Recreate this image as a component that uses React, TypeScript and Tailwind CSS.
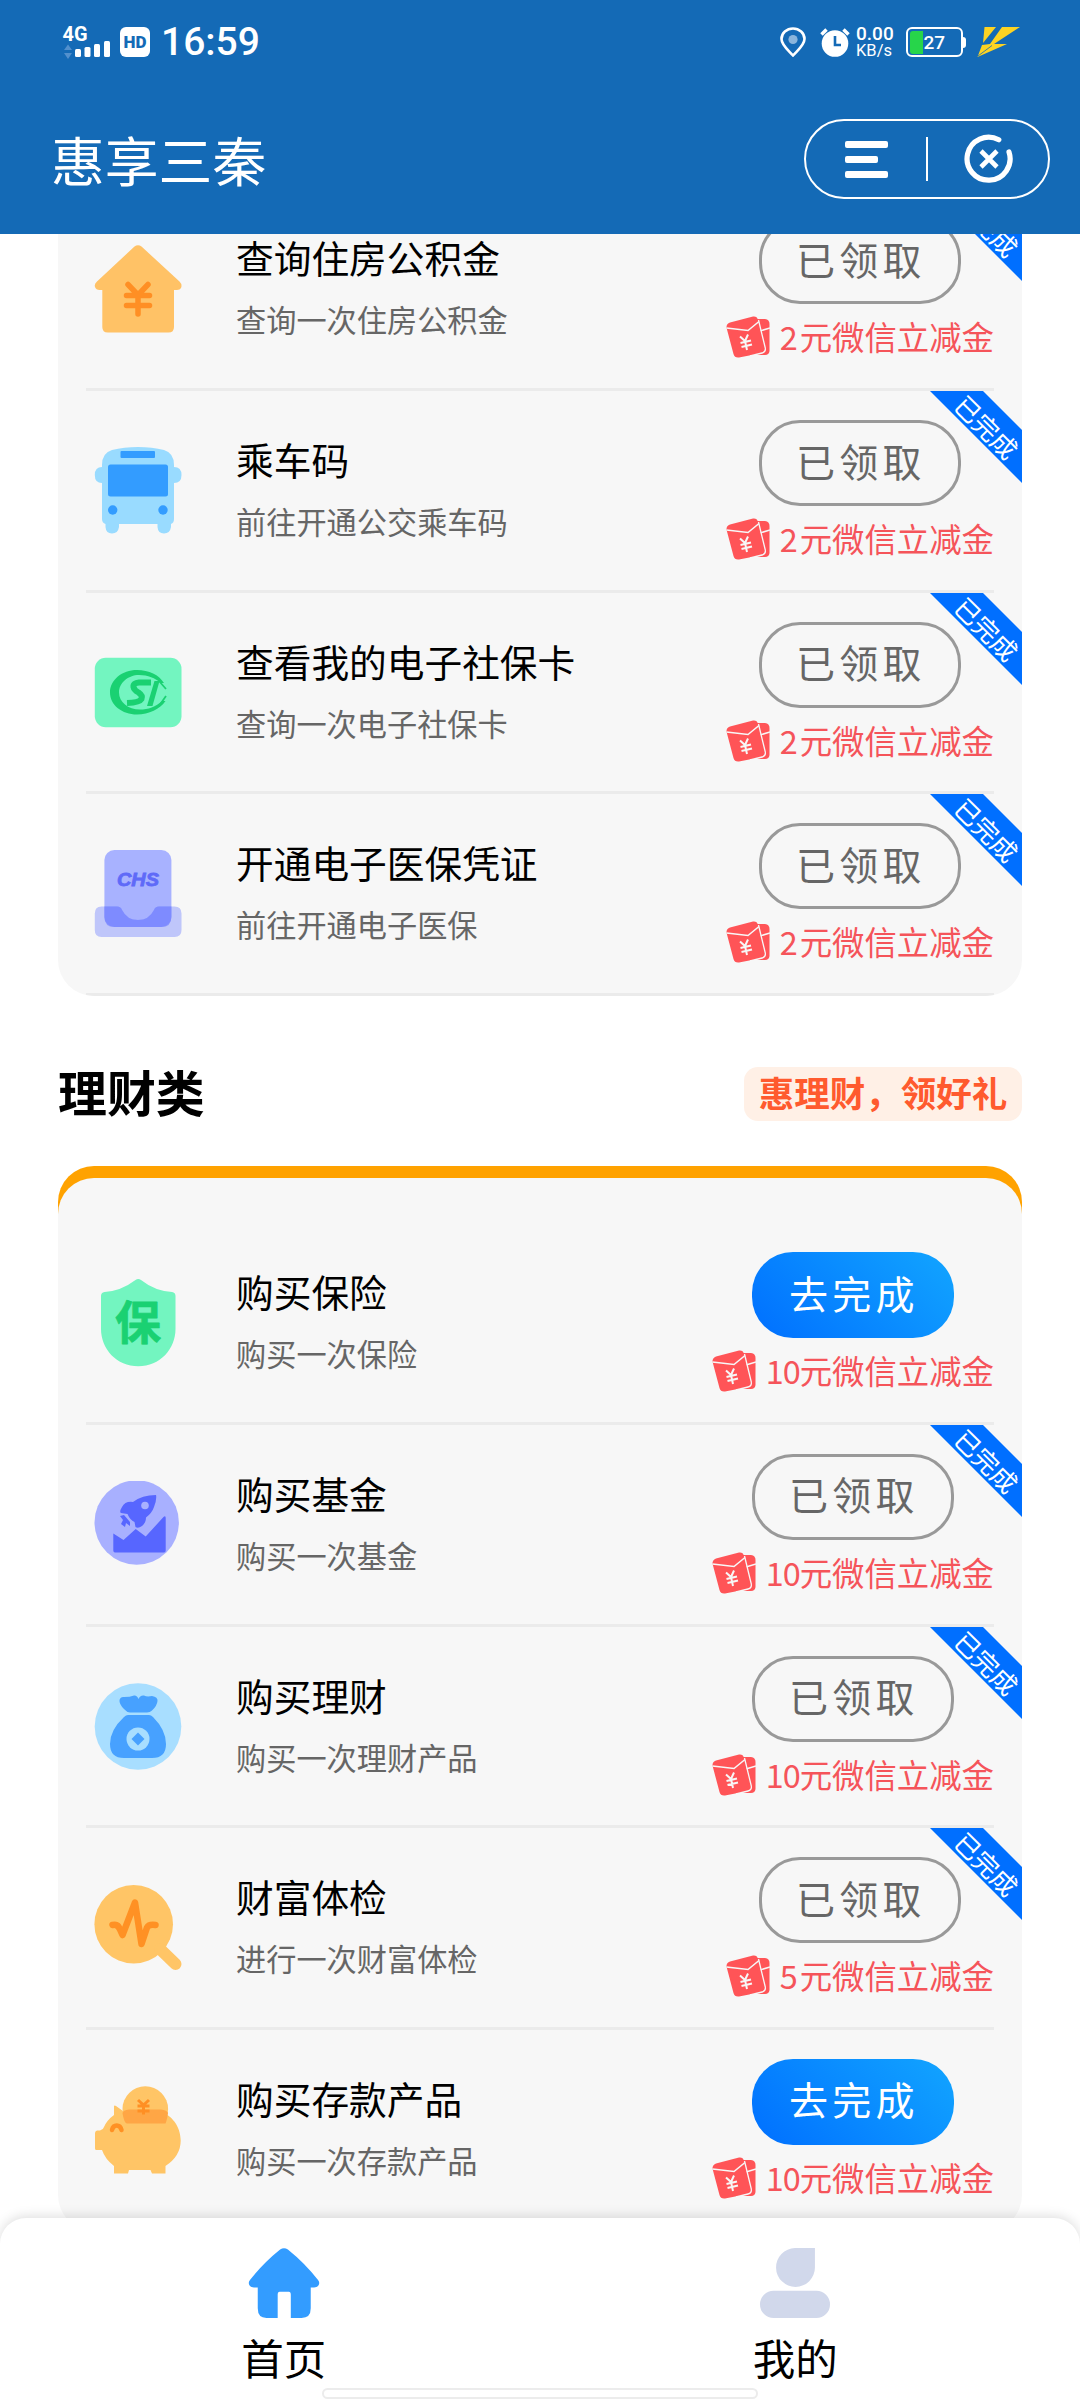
import type { ReactNode } from "react";

type Task = {
  title: string;
  desc: string;
  amount: number;
  done: boolean;
  icon: ReactNode;
};

function HouseIcon() {
  return (
    <svg viewBox="0 0 88 88" className="size-[88px]">
      <path
        d="M40.5 1.5Q44 -1 47.5 1.5L85.5 36.500Q88.500 39.500 87 43Q86 45 83 45H80V82Q80 87.500 74.500 87.500H13.800Q8.300 87.500 8.300 82V45H5.500Q2 45 1 42Q0 39 3 36.500Z"
        fill="#ffc266"
      />
      <path
        d="M34 39.500L44 50L54 39.500M32.500 50.500H55.500M32.500 60.500H55.500M44 50V69"
        fill="none"
        stroke="#ff8f24"
        strokeWidth="5.500"
        strokeLinecap="round"
        strokeLinejoin="round"
      />
    </svg>
  );
}

function BusIcon() {
  return (
    <svg viewBox="0 0 88 88" className="size-[88px]">
      <path
        d="M8 18Q8 6 18 3Q30 0 44 0T70 3Q80 6 80 18V20Q87.500 20 87.500 28T80 36V72Q80 76 77 77V80Q76 86.500 70 86.500T63.500 80V77H25V80Q24 86.500 18 86.500T11.500 80V77Q8 76 8 72V36Q0.800 36 0.800 28T8 20Z"
        fill="#99dbff"
      />
      <rect x="26.500" y="4" width="34.500" height="7" rx="1" fill="#339cff" />
      <rect x="14" y="17.500" width="60" height="32" rx="2.500" fill="#339cff" />
      <circle cx="18.700" cy="63" r="4.700" fill="#339cff" />
      <circle cx="69" cy="63" r="4.700" fill="#339cff" />
    </svg>
  );
}

function SocialCardIcon() {
  return (
    <svg viewBox="0 0 88 88" className="size-[88px]">
      <rect x="0.800" y="8.800" width="86.700" height="69.400" rx="11" fill="#73f5c0" />
      <path
        d="M70 34C65 26 55 21 43 21C28 21 16 31 16 43.500S28 65.500 43 65.500C55 65.500 66 60 71.500 52L68 52C62 58 54 60.500 46 60.500C34 60.500 25 53 25 43.500S34 26 45 26C54 26 61 29 67 34Z"
        fill="#1ad172"
      />
      <path d="M65 32L72 40M72 47L65 57" stroke="#1ad172" strokeWidth="1.800" fill="none" />
      <path
        d="M57 33.500H45Q39 34 39.500 38Q40 41 44.500 43.500Q49 46.500 47.500 50Q45.500 53.500 33 54"
        fill="none"
        stroke="#1ad172"
        strokeWidth="6"
      />
      <path d="M60.500 32H65.500L58.500 57H53Z" fill="#1ad172" />
    </svg>
  );
}

function MedicalIcon() {
  return (
    <svg viewBox="0 0 88 88" className="size-[88px]">
      <rect x="10.400" y="0" width="67" height="77" rx="10" fill="#a8b2ff" />
      <path
        d="M7.500 56.500H23Q27 56.500 28 60Q33 70 44 70T60 60Q61 56.500 65 56.500H80.500Q87.500 56.500 87.500 63.500V80Q87.500 87 80.500 87H7.500Q0.800 87 0.800 80V63.500Q0.800 56.500 7.500 56.500Z"
        fill="#5b6eff"
        fillOpacity="0.360"
      />
      <path
        d="M10.400 56.500H23Q27 56.500 28 60Q33 70 44 70T60 60Q61 56.500 65 56.500H77.400V67Q77.400 77 67.400 77H20.400Q10.400 77 10.400 67Z"
        fill="#7582ff"
        fillOpacity="0.600"
      />
      <text
        x="44"
        y="35.500"
        textAnchor="middle"
        textLength="42"
        lengthAdjust="spacingAndGlyphs"
        className="font-['Liberation_Sans'] text-[18px] font-bold italic"
        fill="#5f6af8"
        stroke="#5f6af8"
        strokeWidth="0.800"
      >
        CHS
      </text>
    </svg>
  );
}

function ShieldIcon() {
  return (
    <svg viewBox="0 0 88 88" className="size-[88px]">
      <path
        d="M41.500 1Q44.300 -1 47 1Q61 12 78 13Q81.500 13.500 81.500 17V50C81.500 70 66 87.300 44.300 87.300S7 70 7 50V17Q7 13.500 10.500 13Q27 12 41.500 1Z"
        fill="#73f5c0"
      />
      <text
        x="44"
        y="60"
        textAnchor="middle"
        className="font-['Noto_Sans_CJK_SC',sans-serif] text-[46px] font-bold"
        fill="#1ad172"
        stroke="#1ad172"
        strokeWidth="0.800"
        strokeLinejoin="round"
      >
        保
      </text>
    </svg>
  );
}

function FundIcon() {
  return (
    <svg viewBox="0 0 88 88" className="size-[88px]">
      <circle cx="42.700" cy="41.500" r="42.200" fill="#a8b0ff" />
      <path
        d="M19.300 52.500L29.500 59L41.700 48L51.700 55.500L69.500 36Q71.700 34 71.700 37V69.500Q71.700 71.500 70 71.500H21Q19.300 71.500 19.300 69.500Z"
        fill="#5766ff"
      />
      <path
        d="M62 14Q63 18 60 26Q58 32 52 36.500Q52 42 48 45Q44 48 41.500 46L40.500 41Q36 39 33.500 33L27 32Q25 31 28 26Q31 20 39 21Q48 14 62 14Z"
        fill="#5766ff"
      />
      <circle cx="51" cy="24.500" r="3.800" fill="#a8b0ff" />
      <path d="M26 35L30 34L36 41L36 45L32 42L31 46L27 43L29 39Z" fill="#5766ff" />
    </svg>
  );
}

function MoneyBagIcon() {
  return (
    <svg viewBox="0 0 88 88" className="size-[88px]">
      <circle cx="44" cy="43.500" r="43.300" fill="#a8deff" />
      <path
        d="M30 14Q36 14 40 12.500Q43 12 44.500 16Q46 12 50 12.500Q53 14 58 13Q64 14 63.500 18Q63 23 58 27.500Q56 29.500 53 29.500H36Q33 29.500 30 26Q25 21 25.500 17Q26.500 13.500 30 14Z"
        fill="#47a1ff"
      />
      <path
        d="M34 32H55Q57 32 59 34Q72 47 72 61Q72 75 58 75H30Q16 75 16 61Q16 47 30 34Q32 32 34 32Z"
        fill="#47a1ff"
      />
      <circle cx="44" cy="56" r="11.500" fill="#a8deff" />
      <path d="M44 49.500L50.500 56L44 62.500L37.500 56Z" fill="#47a1ff" />
    </svg>
  );
}

function CheckupIcon() {
  return (
    <svg viewBox="0 0 88 88" className="size-[88px]">
      <circle cx="39.700" cy="40.300" r="39.300" fill="#ffc566" />
      <path d="M66 65L81.500 80" stroke="#ffc566" strokeWidth="12" strokeLinecap="round" />
      <path
        d="M18.500 41Q24 39.500 26 45.500L28.500 51L41 18.500L47.500 60L53 43.500Q55 40 61.500 41"
        fill="none"
        stroke="#ff9124"
        strokeWidth="6.500"
        strokeLinecap="round"
        strokeLinejoin="round"
      />
    </svg>
  );
}

function PiggyIcon() {
  return (
    <svg viewBox="0 0 88 88" className="size-[88px]">
      <circle cx="51.300" cy="23" r="22.800" fill="#ffc566" />
      <path
        d="M20 20.500Q20 19 22 20L29 25H64C78 28 86.700 41 86.700 54.500Q86.700 70 71.500 80V87.500H58L56.500 84H35L34 87.500H20V80Q11 73 8 64H2.500Q1 64 1 62.500V47Q1 45 3 44.500H6Q9 44 10 41Q13 34 20 29Z"
        fill="#ffc566"
      />
      <path d="M28.500 27Q29 24 35 23.500H67Q73 24 74 27Q73 34 71.500 37.500H33Q30 37 28.500 27Z" fill="#ffa645" />
      <path
        d="M44 14L49.500 19L55 14M43.500 20H55.500M43.500 25H55.500M49.500 19V28.500"
        fill="none"
        stroke="#ff8f24"
        strokeWidth="3"
      />
      <path
        d="M18 44Q19 39.500 22.700 39.500T27.500 44"
        fill="none"
        stroke="#ff9124"
        strokeWidth="4.500"
        strokeLinecap="round"
      />
    </svg>
  );
}

function RedPacketIcon() {
  return (
    <svg viewBox="0 0 44 42" className="h-[42px] w-[44px] shrink-0">
      <path d="M31 3H39Q43.500 3.500 43.500 8V35Q43 39 39 39H26Z" fill="#ff5457" />
      <path d="M34 15L44 12" stroke="#f7f7f7" strokeWidth="1.500" />
      <path
        d="M4 6.500L27 0.600Q31 0 32 4L39 32Q39.500 36 36 37L13 41.500Q8.500 42 7.500 38L0.600 12Q0 8 4 6.500Z"
        fill="#ff5457"
      />
      <path d="M32.500 4L39.300 32Q40 36 36 37L24 40" fill="none" stroke="#f7f7f7" strokeWidth="1.300" />
      <path d="M0.500 12L22 14.500L33 5.500" fill="none" stroke="#f7f7f7" strokeWidth="1.600" />
      <path
        d="M14 20.500L19 25L22 18.500M14.500 27L25 24.500M15.500 31L26 28.500M19 25L21 34"
        fill="none"
        stroke="#f7f7f7"
        strokeWidth="2"
      />
    </svg>
  );
}

const SERVICE_TASKS: Task[] = [
  { title: "查询住房公积金", desc: "查询一次住房公积金", amount: 2, done: true, icon: <HouseIcon /> },
  { title: "乘车码", desc: "前往开通公交乘车码", amount: 2, done: true, icon: <BusIcon /> },
  { title: "查看我的电子社保卡", desc: "查询一次电子社保卡", amount: 2, done: true, icon: <SocialCardIcon /> },
  { title: "开通电子医保凭证", desc: "前往开通电子医保", amount: 2, done: true, icon: <MedicalIcon /> },
];

const FINANCE_TASKS: Task[] = [
  { title: "购买保险", desc: "购买一次保险", amount: 10, done: false, icon: <ShieldIcon /> },
  { title: "购买基金", desc: "购买一次基金", amount: 10, done: true, icon: <FundIcon /> },
  { title: "购买理财", desc: "购买一次理财产品", amount: 10, done: true, icon: <MoneyBagIcon /> },
  { title: "财富体检", desc: "进行一次财富体检", amount: 5, done: true, icon: <CheckupIcon /> },
  { title: "购买存款产品", desc: "购买一次存款产品", amount: 10, done: false, icon: <PiggyIcon /> },
];

function Ribbon() {
  return (
    <div className="absolute top-0 right-0 size-[92px] overflow-hidden">
      <svg viewBox="0 0 92 92" className="size-[92px]">
        <path d="M0 0H53L92 39V92Z" fill="#006fff" />
        <text
          x="56"
          y="46"
          textAnchor="middle"
          transform="rotate(45 56 36.500)"
          className="text-[25.5px]"
          fill="#fff"
        >
          已完成
        </text>
      </svg>
    </div>
  );
}

function TaskRow({ task }: { task: Task }) {
  return (
    <li className="relative flex h-[201.6px] flex-col">
      <div className="flex flex-1 items-start pr-7 pl-9">
        <div className="mt-14 w-[142px] shrink-0">{task.icon}</div>
        <div className="flex flex-1 flex-col pt-10">
          <h3 className="text-[37.7px] leading-[56px] text-black">{task.title}</h3>
          <p className="mt-[11px] text-[30.2px] leading-[46px] text-[#666]">{task.desc}</p>
        </div>
        <div className="flex flex-col items-center pt-[29px]">
          {task.done ? (
            <button className="h-[86px] w-[202px] rounded-[41px] border-3 border-[#999] pb-[6px] pl-[2px] text-[39px] leading-none tracking-[4.2px] text-[#666]">
              已领取
            </button>
          ) : (
            <button className="h-[86px] w-[202px] rounded-[41px] bg-linear-[45deg,#006fff,#12a5ff] pb-[6px] pl-[2px] text-[39px] leading-none tracking-[4.2px] text-white">
              去完成
            </button>
          )}
          <div className="mt-[10px] flex h-[46px] items-center gap-[10px]">
            <RedPacketIcon />
            <span className="flex pb-[2px] text-[32.4px] leading-[46px] text-[#f5545a]">
              {task.amount < 10 ? (
                <span className="w-5">{task.amount}</span>
              ) : (
                <span className="w-[34px] tracking-[-1px]">{task.amount}</span>
              )}
              <span>元微信立减金</span>
            </span>
          </div>
        </div>
      </div>
      <div className="mx-7 h-[3px] shrink-0 bg-[#ebebeb]" />
      {task.done && <Ribbon />}
    </li>
  );
}

function StatusBar() {
  return (
    <div className="flex h-[84px] items-center justify-between pr-[60px] pl-[62px] text-white">
      <div className="flex items-center">
        <svg viewBox="0 0 48 34" className="h-[34px] w-[48px] overflow-visible">
          <text
            x="0.500"
            y="16"
            textLength="25"
            lengthAdjust="spacingAndGlyphs"
            className="font-[Roboto] text-[21px] font-bold"
            fill="#fff"
          >
            4G
          </text>
          <path d="M2 25L6 19.500L10 25ZM2 28L6 34L10 28Z" fill="#5290cd" />
          <rect x="13" y="24" width="6" height="8" rx="1.500" fill="#fff" />
          <rect x="22.500" y="22" width="6" height="10" rx="1.500" fill="#fff" />
          <rect x="32" y="19" width="6" height="13" rx="1.500" fill="#fff" />
          <rect x="42" y="16" width="6" height="16" rx="1.500" fill="#fff" />
        </svg>
        <div className="ml-[10px] flex size-[30px] items-center justify-center rounded-md bg-white font-[Roboto] text-[17px] leading-none font-black text-[#146ab6]">
          HD
        </div>
        <span className="ml-[11px] font-[Roboto] text-[39px] leading-none font-medium">16:59</span>
      </div>
      <div className="flex items-center">
        <svg viewBox="0 0 26 30" className="h-[30px] w-[26px]">
          <path
            d="M13 28.500C8 23 1.500 18 1.500 12A11.500 10.500 0 0 1 24.500 12C24.500 18 18 23 13 28.500Z"
            fill="none"
            stroke="#fff"
            strokeWidth="2.600"
          />
          <circle cx="13" cy="12.500" r="4.600" fill="#8ab5dc" />
        </svg>
        <svg viewBox="0 0 30 30" className="ml-[14px] h-[30px] w-[30px]">
          <circle cx="15" cy="16.500" r="13.300" fill="#fff" />
          <path d="M1.500 7.500L6.500 2.500M28.500 7.500L23.500 2.500" stroke="#fff" strokeWidth="3.500" />
          <path d="M15 9V18H21" fill="none" stroke="#146ab6" strokeWidth="2.600" />
        </svg>
        <div className="ml-[6px] flex w-[38px] flex-col font-[Roboto]">
          <span className="text-[19px] leading-[17px] font-medium">0.00</span>
          <span className="text-[16.5px] leading-[17px]">KB/s</span>
        </div>
        <div className="ml-3 flex h-[30px] w-[57px] items-center rounded-[6px] border-2 border-white px-[1.5px]">
          <div className="h-[23px] w-[13px] rounded-l-[3px] bg-[#27d54a]" />
          <span className="ml-px font-[Roboto] text-[19px] leading-none font-medium">27</span>
        </div>
        <div className="h-[11px] w-[3px] rounded-r-sm bg-white" />
        <svg viewBox="0 0 43 30" className="ml-[11px] h-[30px] w-[43px]">
          <path d="M7.500 0H19L6 16Z" fill="#fdd323" />
          <path d="M25 0H43L17 17H30L0.500 30L5 18L13 17Z" fill="#fdd323" />
          <path d="M1 29L15 18.500" stroke="#146ab6" strokeWidth="0.800" />
        </svg>
      </div>
    </div>
  );
}

function TitleBar() {
  return (
    <div className="flex h-[150px] items-center justify-between pr-[30px] pl-[51px] text-white">
      <h1 className="text-[53.8px] leading-none">惠享三秦</h1>
      <div className="flex h-20 w-[246px] items-center rounded-full border-2 border-white pl-[39px]">
        <div className="flex w-[43px] flex-col gap-2">
          <div className="h-[7px] rounded-xs bg-white" />
          <div className="h-[7px] w-[33px] rounded-xs bg-white" />
          <div className="h-[7px] rounded-xs bg-white" />
        </div>
        <div className="ml-[38px] h-11 w-[2px] bg-white" />
        <svg viewBox="0 0 50 50" className="ml-[36px] size-[50px]">
          <path
            d="M34.800 5.800A21.500 21.500 0 1 0 45 18"
            fill="none"
            stroke="#fff"
            strokeWidth="5.200"
            strokeLinecap="round"
          />
          <path d="M17 17L33 33M33 17L17 33" stroke="#fff" strokeWidth="4.600" />
        </svg>
      </div>
    </div>
  );
}

function TabBar() {
  return (
    <nav className="relative z-10 flex h-[182px] shrink-0 flex-col rounded-t-[26px] bg-white shadow-[0_-2px_12px_rgba(0,0,0,0.13)]">
      <div className="flex h-[170px] pt-[30px] pr-[29px] pl-7">
        <div className="flex flex-1 flex-col items-center">
          <svg viewBox="0 0 72 72" className="size-[72px]">
            <path
              d="M32 1.500Q36 -1 40 1.500Q58 16 71 33Q73.500 36 71 39Q70 40.500 67 40.500H63.500V62Q63.500 72 54 72H43V48Q43 45 41 45H31.500Q29.500 45 29.500 48V72H18Q9 72 9 62V40.500H5Q2 40.500 1 39Q-1.500 36 1 33Q14 16 32 1.500Z"
              fill="#339cff"
            />
          </svg>
          <span className="mt-2 text-[42.5px] leading-[62px] text-black">首页</span>
        </div>
        <div className="flex flex-1 flex-col items-center">
          <svg viewBox="0 0 72 72" className="size-[72px]">
            <path d="M36 0H56.500V20A20 20 0 1 1 36 0Z" fill="#d1d8eb" />
            <rect x="0" y="44" width="72" height="28" rx="14" fill="#d1d8eb" />
          </svg>
          <span className="mt-2 text-[42.5px] leading-[62px] text-black">我的</span>
        </div>
      </div>
      <div className="mx-auto h-[11px] w-[436px] shrink-0 rounded-full border-2 border-[#ececec] bg-white" />
    </nav>
  );
}

export default function App() {
  return (
    <div className="flex h-[2400px] w-[1080px] flex-col overflow-hidden bg-white font-['Noto_Sans_CJK_SC',sans-serif]">
      <header className="relative z-10 h-[234px] shrink-0 bg-[#146ab6]">
        <StatusBar />
        <TitleBar />
      </header>

      <main className="min-h-0 flex-1 overflow-hidden px-[58px]">
        <ul className="-mt-[44.6px] overflow-hidden rounded-b-[36px] bg-[#f7f7f7]">
          {SERVICE_TASKS.map((task) => (
            <TaskRow key={task.title} task={task} />
          ))}
        </ul>

        <div className="mt-[71px] flex h-[54px] items-center justify-between">
          <h2 className="pb-[5px] text-[48.9px] leading-none font-bold text-black">理财类</h2>
          <span className="flex h-[54px] w-[278px] items-center justify-center rounded-[14px] bg-[#fff0e6] pb-[5px] text-[35.5px] leading-none font-bold whitespace-nowrap text-[#ff5a2e]">
            惠理财，领好礼
          </span>
        </div>

        {/* orange edge shows only above the rounded top of the card */}
        <div className="mt-[45.2px] rounded-t-[36px] bg-linear-[180deg,#ffa200_60px,transparent_60px] pt-3">
          <ul className="overflow-hidden rounded-[36px] bg-[#f7f7f7] pt-[45.4px]">
            {FINANCE_TASKS.map((task) => (
              <TaskRow key={task.title} task={task} />
            ))}
          </ul>
        </div>
      </main>

      <TabBar />
    </div>
  );
}
